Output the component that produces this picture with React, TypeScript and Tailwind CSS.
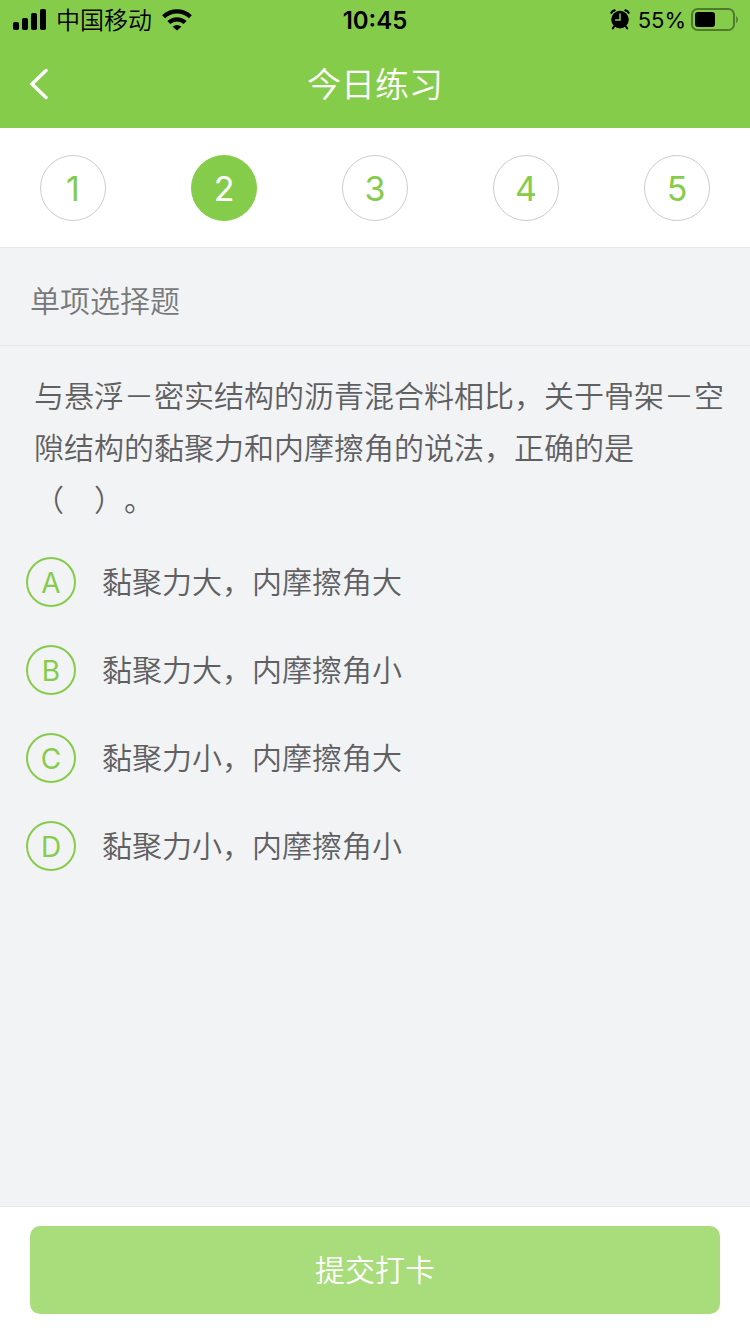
import { useState } from 'react';

const STEPS = [1, 2, 3, 4, 5];

const OPTIONS = [
  { key: 'A', text: '黏聚力大，内摩擦角大' },
  { key: 'B', text: '黏聚力大，内摩擦角小' },
  { key: 'C', text: '黏聚力小，内摩擦角大' },
  { key: 'D', text: '黏聚力小，内摩擦角小' },
];

const SignalIcon = () => (
  <svg className="w-[34px] h-[22px]" viewBox="0 0 34 22">
    <rect x="1" y="13" width="6" height="8" rx="1.8" />
    <rect x="10" y="9" width="6" height="12" rx="1.8" />
    <rect x="19" y="4" width="6" height="17" rx="1.8" />
    <rect x="28" y="0" width="6" height="21" rx="1.8" />
  </svg>
);

const WifiIcon = () => (
  <svg className="w-[30px] h-[22px]" viewBox="0 0 30 22">
    <path d="M15 21.6l-4.4-3.8a6.4 6.4 0 0 1 8.8 0z" />
    <g fill="none" stroke="#000" strokeWidth="4.2">
      <path d="M1.6 7.8a19.4 19.4 0 0 1 26.8 0" />
      <path d="M6.8 13.6a11.8 11.8 0 0 1 16.4 0" />
    </g>
  </svg>
);

const AlarmIcon = () => (
  <svg className="w-5 h-[22px]" viewBox="0 0 20 22">
    <circle cx="10" cy="10.6" r="8.8" />
    <path
      d="M1.4 3.8Q2.4 1.8 4.6 1.4M18.6 3.8Q17.6 1.8 15.4 1.4"
      fill="none"
      stroke="#000"
      strokeWidth="2.2"
      strokeLinecap="round"
    />
    <path
      d="M4.4 17 2.8 19.4M15.6 17l1.6 2.4"
      stroke="#000"
      strokeWidth="2"
      strokeLinecap="round"
    />
    <path
      d="M10 5v6H5.6"
      fill="none"
      stroke="#86cc4b"
      strokeWidth="1.5"
      strokeLinecap="round"
    />
  </svg>
);

const BatteryIcon = () => (
  <svg className="w-12 h-6" viewBox="0 0 48 24">
    <rect
      x="2"
      y="1"
      width="42"
      height="21"
      rx="5.5"
      fill="none"
      stroke="#000"
      strokeOpacity=".4"
      strokeWidth="2"
    />
    <rect x="5" y="4" width="20" height="15" rx="3" />
    <path d="M46.2 8c2.2 1.4 2.2 5.8 0 7.2z" fillOpacity=".4" />
  </svg>
);

/* 顶部状态栏 */
const StatusBar = () => (
  <div className="grid grid-cols-[1fr_auto_1fr] items-center h-10 px-3 text-2xl text-black">
    <div className="flex items-center gap-2.5">
      <SignalIcon />
      <span className="pt-0.5 font-[350]">中国移动</span>
      <WifiIcon />
    </div>
    <span className="pt-0.5 font-semibold">10:45</span>
    <div className="flex items-center justify-end gap-1">
      <AlarmIcon />
      <span className="pt-0.5 pl-1 text-[22px]">55%</span>
      <BatteryIcon />
    </div>
  </div>
);

const App = () => {
  const [step, setStep] = useState(2);
  const [answer, setAnswer] = useState('');

  return (
    <div className="flex flex-col min-h-screen bg-[#f2f3f5] font-[Inter,'Noto_Sans_CJK_SC',sans-serif] [text-spacing-trim:space-all]">
      <header className="bg-[#86cc4b]">
        <StatusBar />
        <div className="grid grid-cols-[1fr_auto_1fr] items-center h-22 px-7">
          <button type="button" aria-label="返回" className="w-6">
            <svg className="w-5 h-8" viewBox="0 0 20 32" fill="none">
              <path
                d="M18 2.5 4 16l14 13.5"
                stroke="#fff"
                strokeWidth="3.4"
                strokeLinecap="round"
              />
            </svg>
          </button>
          <h1 className="text-[34px] font-[350] text-white">今日练习</h1>
        </div>
      </header>

      {/* 题号 */}
      <nav className="flex items-center justify-between h-30 px-10 bg-white border-b border-[#e6e7e9]">
        {STEPS.map((n) => (
          <button
            key={n}
            type="button"
            onClick={() => setStep(n)}
            className={`size-[66px] pt-0.5 rounded-full border text-[34px] ${
              n === step
                ? 'border-[#86cc4b] bg-[#86cc4b] text-white'
                : 'border-[#cccccc] bg-white text-[#86cc4b]'
            }`}
          >
            {n}
          </button>
        ))}
      </nav>

      <main className="flex-1 text-[30px] font-[350] text-[#606062]">
        <h2 className="flex items-center h-[98px] pt-2.5 px-[30px] border-b border-[#e6e7e9] text-[#77787a]">
          单项选择题
        </h2>

        <p className="pt-6 pl-[34px] pr-[26px] leading-[52px]">
          与悬浮－密实结构的沥青混合料相比，关于骨架－空隙结构的黏聚力和内摩擦角的说法，正确的是（　）。
        </p>

        <div className="flex flex-col gap-[38px] pt-[31px] px-[26px]">
          {OPTIONS.map((o) => (
            <label key={o.key} className="flex items-center gap-[26px] h-[50px]">
              <input
                type="radio"
                name="answer"
                value={o.key}
                checked={answer === o.key}
                onChange={() => setAnswer(o.key)}
                className="peer sr-only"
              />
              <span className="flex items-center justify-center size-[50px] pt-0.5 rounded-full border-2 border-[#86cc4b] text-[28px] font-normal text-[#86cc4b] peer-checked:bg-[#86cc4b] peer-checked:text-white">
                {o.key}
              </span>
              <span>{o.text}</span>
            </label>
          ))}
        </div>
      </main>

      <footer className="px-[30px] pt-[19px] pb-5 bg-white border-t border-[#e6e7e9]">
        <button
          type="button"
          className="w-full h-22 rounded-[10px] bg-[#a9dc7a] text-[30px] font-[350] text-white"
        >
          提交打卡
        </button>
      </footer>
    </div>
  );
};

export default App;
